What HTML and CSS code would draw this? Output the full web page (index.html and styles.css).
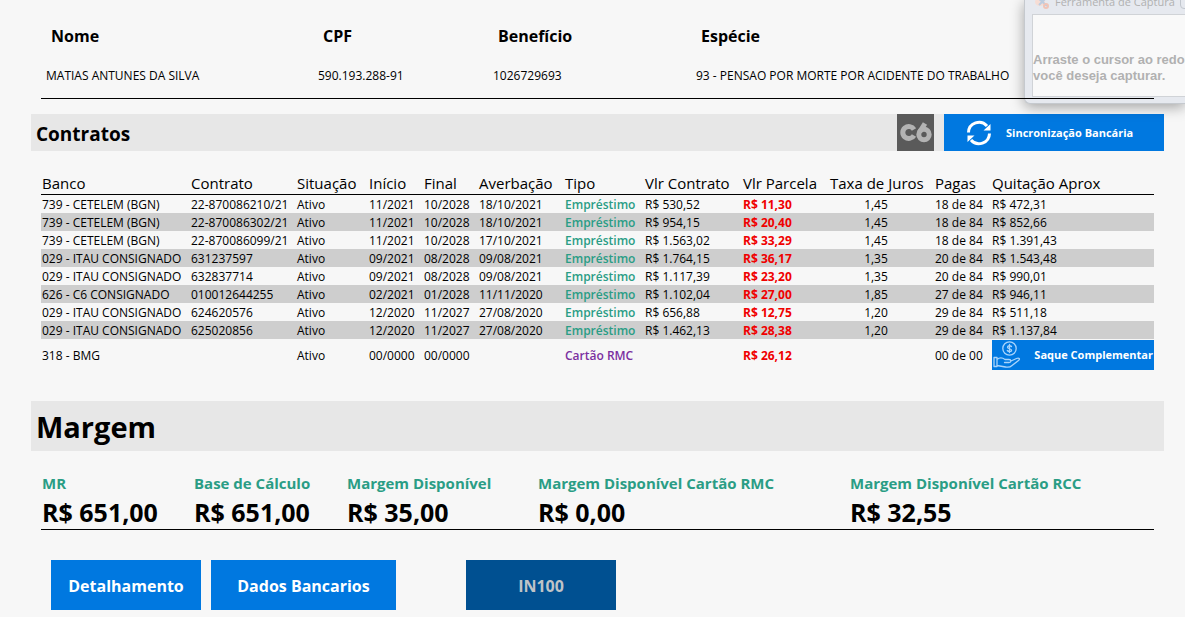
FILE: index.html
```html
<!DOCTYPE html>
<html lang="pt-BR">
<head>
<meta charset="utf-8">
<meta name="viewport" content="width=device-width, initial-scale=1">
<title>Contratos</title>
<link rel="stylesheet" href="styles.css">
</head>
<body>
<main class="page">
  <table class="person">
    <colgroup><col class="p-name"><col class="p-cpf"><col class="p-benefit"><col class="p-kind"></colgroup>
    <thead><tr><th>Nome</th><th>CPF</th><th>Benefício</th><th>Espécie</th></tr></thead>
    <tbody><tr><td>MATIAS ANTUNES DA SILVA</td><td>590.193.288-91</td><td>1026729693</td><td>93 - PENSAO POR MORTE POR ACIDENTE DO TRABALHO</td></tr></tbody>
  </table>

  <header class="contracts-bar">
    <h2 class="contracts-title">Contratos</h2>
    <svg class="c6" viewBox="0 0 37 37" role="img" aria-label="C6">
      <rect width="37" height="37" fill="#5a5a5a"/>
      <g fill="none" stroke="#b3b3b3" stroke-width="5">
        <path d="M17 15.500A6 6 0 1 0 17 21.500"/>
        <circle cx="27" cy="20.500" r="5.200"/>
        <path d="M22.600 18L28 9.500"/>
      </g>
    </svg>
    <button class="btn sync" type="button">
      <svg class="sync-icon" viewBox="0 0 26 26" aria-hidden="true">
        <g fill="none" stroke="#fff" stroke-width="3">
          <path d="M2.500 12.500A10.500 10.500 0 0 1 21 6"/>
          <path d="M23.500 13.500A10.500 10.500 0 0 1 5 20"/>
        </g>
        <path d="M24.500 4V10.500H17.500zM1.500 22V15.500H8.500z" fill="#fff"/>
      </svg>
      <span>Sincronização Bancária</span>
    </button>
  </header>

  <table class="contracts">
    <colgroup><col class="c-bank"><col class="c-number"><col class="c-status"><col class="c-month"><col class="c-month"><col class="c-date"><col class="c-type"><col class="c-value"><col class="c-share"><col class="c-rate"><col class="c-paid"><col class="c-payoff"></colgroup>
    <thead><tr><th>Banco</th><th>Contrato</th><th>Situação</th><th>Início</th><th>Final</th><th>Averbação</th><th>Tipo</th><th>Vlr Contrato</th><th>Vlr Parcela</th><th>Taxa de Juros</th><th>Pagas</th><th>Quitação Aprox</th></tr></thead>
    <tbody>
      <tr><td>739 - CETELEM (BGN)</td><td>22-870086210/21</td><td>Ativo</td><td>11/2021</td><td>10/2028</td><td>18/10/2021</td><td class="loan">Empréstimo</td><td>R$ 530,52</td><td class="due">R$ 11,30</td><td class="rate">1,45</td><td>18 de 84</td><td>R$ 472,31</td></tr>
      <tr><td>739 - CETELEM (BGN)</td><td>22-870086302/21</td><td>Ativo</td><td>11/2021</td><td>10/2028</td><td>18/10/2021</td><td class="loan">Empréstimo</td><td>R$ 954,15</td><td class="due">R$ 20,40</td><td class="rate">1,45</td><td>18 de 84</td><td>R$ 852,66</td></tr>
      <tr><td>739 - CETELEM (BGN)</td><td>22-870086099/21</td><td>Ativo</td><td>11/2021</td><td>10/2028</td><td>17/10/2021</td><td class="loan">Empréstimo</td><td>R$ 1.563,02</td><td class="due">R$ 33,29</td><td class="rate">1,45</td><td>18 de 84</td><td>R$ 1.391,43</td></tr>
      <tr><td>029 - ITAU CONSIGNADO</td><td>631237597</td><td>Ativo</td><td>09/2021</td><td>08/2028</td><td>09/08/2021</td><td class="loan">Empréstimo</td><td>R$ 1.764,15</td><td class="due">R$ 36,17</td><td class="rate">1,35</td><td>20 de 84</td><td>R$ 1.543,48</td></tr>
      <tr><td>029 - ITAU CONSIGNADO</td><td>632837714</td><td>Ativo</td><td>09/2021</td><td>08/2028</td><td>09/08/2021</td><td class="loan">Empréstimo</td><td>R$ 1.117,39</td><td class="due">R$ 23,20</td><td class="rate">1,35</td><td>20 de 84</td><td>R$ 990,01</td></tr>
      <tr><td>626 - C6 CONSIGNADO</td><td>010012644255</td><td>Ativo</td><td>02/2021</td><td>01/2028</td><td>11/11/2020</td><td class="loan">Empréstimo</td><td>R$ 1.102,04</td><td class="due">R$ 27,00</td><td class="rate">1,85</td><td>27 de 84</td><td>R$ 946,11</td></tr>
      <tr><td>029 - ITAU CONSIGNADO</td><td>624620576</td><td>Ativo</td><td>12/2020</td><td>11/2027</td><td>27/08/2020</td><td class="loan">Empréstimo</td><td>R$ 656,88</td><td class="due">R$ 12,75</td><td class="rate">1,20</td><td>29 de 84</td><td>R$ 511,18</td></tr>
      <tr><td>029 - ITAU CONSIGNADO</td><td>625020856</td><td>Ativo</td><td>12/2020</td><td>11/2027</td><td>27/08/2020</td><td class="loan">Empréstimo</td><td>R$ 1.462,13</td><td class="due">R$ 28,38</td><td class="rate">1,20</td><td>29 de 84</td><td>R$ 1.137,84</td></tr>
      <tr class="card-row"><td>318 - BMG</td><td></td><td>Ativo</td><td>00/0000</td><td>00/0000</td><td></td><td class="card">Cartão RMC</td><td></td><td class="due">R$ 26,12</td><td></td><td>00 de 00</td><td>
        <button class="btn withdraw" type="button">
          <svg class="hand-icon" viewBox="0 0 28 28" fill="none" stroke="#a9d4fb" stroke-width="1.300" stroke-linecap="round" stroke-linejoin="round" aria-hidden="true">
            <circle cx="16.500" cy="7.500" r="6.700"/>
            <path d="M18.500 5.500C17.500 4.300 14.500 4.500 14.500 6.200S18.600 7.600 18.600 9.200 15.500 11 14.300 9.500M16.500 3.500V11.500"/>
            <path d="M1 16.500H4V25.500H1zM4 18.500C7 16 10 17 12 18.500H16C18.500 18.500 18.500 21.500 16 21.500H11.500M18 20L23.500 17.500C26 16.500 27.500 18 25.500 19.500L19 24.500C17.500 26 15 26.500 12.500 26L4 24.500"/>
          </svg>
          <span>Saque Complementar</span>
        </button></td></tr>
    </tbody>
  </table>

  <h2 class="margin-title">Margem</h2>
  <dl class="margins">
    <div><dt>MR</dt><dd>R$ 651,00</dd></div>
    <div><dt>Base de Cálculo</dt><dd>R$ 651,00</dd></div>
    <div><dt>Margem Disponível</dt><dd>R$ 35,00</dd></div>
    <div><dt>Margem Disponível Cartão RMC</dt><dd>R$ 0,00</dd></div>
    <div><dt>Margem Disponível Cartão RCC</dt><dd>R$ 32,55</dd></div>
  </dl>

  <div class="actions">
    <button class="btn action" type="button">Detalhamento</button>
    <button class="btn action wide" type="button">Dados Bancarios</button>
    <button class="btn action query" type="button" disabled>IN100</button>
  </div>
</main>

<aside class="capture">
  <div class="capture-head">
    <svg class="capture-icon" viewBox="0 0 16 16" aria-hidden="true">
      <ellipse cx="6" cy="9" rx="5" ry="4" fill="#f6ddd5"/>
      <path d="M3 4L13 13M13 4L5 12" stroke="#bccde0" stroke-width="2"/>
      <circle cx="12" cy="13" r="2" fill="none" stroke="#f0c4b7" stroke-width="2"/>
    </svg>
    <span>Ferramenta de Captura</span>
    <span class="capture-min"></span>
  </div>
  <p class="capture-body">Arraste o cursor ao redor<br>você deseja capturar.</p>
</aside>
</body>
</html>
```
FILE: styles.css
```css
* { box-sizing: border-box; }

body {
  margin: 0;
  position: relative;
  overflow-x: hidden;
  background: #f7f7f7;
  color: #000;
  font: 12px/18px "Segoe UI", "Open Sans", "Noto Sans", sans-serif;
}

.page { padding: 18px 21px 7px 31px; }

h2, dl, dd, p { margin: 0; }

table {
  table-layout: fixed;
  border-collapse: separate;
  border-spacing: 0;
}

th, td { padding: 0; text-align: left; white-space: nowrap; }

.btn {
  border: 0;
  padding: 2px 0 0;
  background: #0078e0;
  color: #fff;
  font: inherit;
  font-size: 11px;
  font-weight: 700;
  white-space: nowrap;
  cursor: pointer;
}

.person {
  position: relative;
  z-index: 1;
  width: calc(100% - 20px);
  margin: 0 10px 15px;
  border-bottom: 1px solid #000;
}
.person th { height: 36px; padding-left: 10px; font-size: 16px; }
.person td { height: 44px; padding-left: 5px; }
.p-name { width: 272px; }
.p-cpf { width: 175px; }
.p-benefit { width: 203px; }
.p-kind { width: 463px; }

.contracts-bar {
  display: flex;
  align-items: center;
  height: 37px;
  background: #e7e7e7;
}
.contracts-title { flex: 1; padding: 3px 0 0 5px; font-size: 19px; line-height: 34px; }
.c6 { width: 37px; height: 37px; margin-right: 10px; }
.sync {
  display: flex;
  align-items: center;
  width: 220px;
  height: 37px;
  padding: 0 0 0 22px;
}
.sync-icon { width: 26px; height: 26px; margin-right: 14px; }

.contracts { width: calc(100% - 20px); margin: 22px 10px 31px; }
.contracts th {
  height: 22px;
  padding-left: 1px;
  border-bottom: 1px solid #000;
  font-size: 15px;
  font-weight: 400;
  line-height: 21px;
}
.contracts td { height: 18px; padding: 2px 0 0 1px; line-height: 16px; }
.contracts tbody tr:nth-child(even) { background: #cecece; }
.c-bank { width: 149px; }
.c-number { width: 106px; }
.c-status { width: 72px; }
.c-month { width: 55px; }
.c-date { width: 86px; }
.c-type { width: 80px; }
.c-value { width: 98px; }
.c-share { width: 87px; }
.c-rate { width: 105px; }
.c-paid { width: 57px; }
.c-payoff { width: 163px; }
.contracts .loan { color: #2a9d85; font-weight: 600; }
.contracts .card { color: #7b2fa0; font-weight: 600; }
.contracts .due { color: #f00000; font-weight: 700; }
.contracts .rate { padding-right: 12px; text-align: center; }
.contracts .card-row td { height: 31px; }
.contracts .card-row td:last-child { padding-top: 1px; }
.withdraw {
  display: flex;
  align-items: center;
  justify-content: space-between;
  width: 100%;
  height: 30px;
  padding: 0 1px;
}
.hand-icon { width: 28px; height: 28px; }

.margin-title {
  padding: 2px 0 0 5px;
  background: #e7e7e7;
  font-size: 29px;
  line-height: 48px;
}
.margins {
  display: grid;
  grid-template-columns: 152fr 153fr 191fr 312fr 304fr;
  margin: 21px 10px 30px;
  padding-left: 1px;
  border-bottom: 1px solid #000;
  font-weight: 700;
  white-space: nowrap;
}
.margins dt { color: #2a9d85; font-size: 15px; line-height: 22px; }
.margins dd { padding-top: 1px; font-size: 25px; line-height: 34px; }

.actions { display: flex; gap: 10px; padding-left: 20px; }
.action { width: 150px; height: 50px; font-size: 16px; }
.wide { width: 185px; }
.query { margin-left: 60px; background: #005091; color: #c0c4c8; cursor: default; }

.capture {
  position: absolute;
  top: 0;
  right: 0;
  width: 161px;
  height: 104px;
  padding: 0 0 6px 7px;
  overflow: hidden;
  border: 1px solid #c5c9ce;
  border-width: 0 0 1px 1px;
  border-radius: 0 0 0 6px;
  background: #e6e9ef;
  box-shadow: 0 3px 14px rgba(0, 0, 0, 0.350);
  color: #b1b1b1;
  white-space: nowrap;
}
.capture-head {
  display: flex;
  align-items: center;
  gap: 5px;
  height: 14px;
  padding-left: 2px;
  overflow: hidden;
  font-size: 11px;
  line-height: 14px;
}
.capture-head span { flex: none; margin-top: -10px; }
.capture-icon { flex: none; width: 16px; height: 16px; margin-top: -12px; }
.capture-head .capture-min { width: 20px; height: 14px; border: 1px solid #c2c7ce; border-radius: 4px; }
.capture-body {
  height: 83px;
  padding-top: 37px;
  border: 1px solid #d0d3d7;
  border-right: 0;
  background: #f9f9f9;
  font: bold 13px/16px "Liberation Sans", Arial, sans-serif;
}
```
